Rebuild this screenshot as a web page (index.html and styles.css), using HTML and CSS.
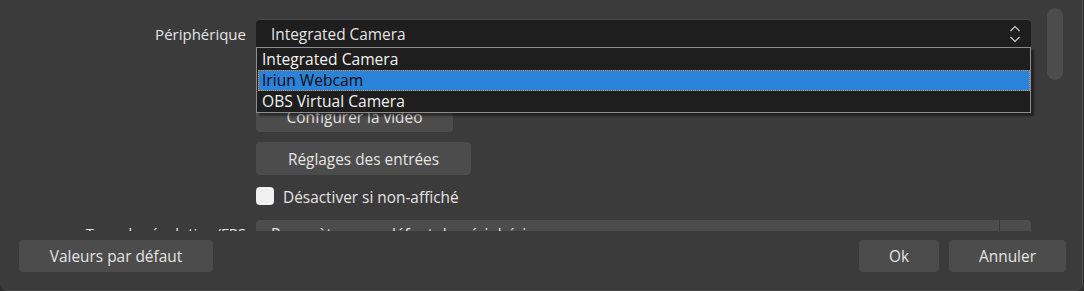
FILE: index.html
```html
<!DOCTYPE html>
<html lang="fr">
<head>
<meta charset="utf-8">
<title>Propriétés</title>
<link rel="stylesheet" href="styles.css">
</head>
<body>
<div class="window">
  <div class="scroll">
    <div class="form">
      <div class="label">Périphérique</div>
      <div class="field">
        <div class="combo combo-open">
          <span class="combo-text">Integrated Camera</span>
          <svg class="chev" width="12" height="20" viewBox="0 0 12 20">
            <polyline points="1.5,7 6,2.5 10.5,7" fill="none" stroke="#cfcfcf" stroke-width="1.2"/>
            <polyline points="1.5,13 6,17.5 10.5,13" fill="none" stroke="#cfcfcf" stroke-width="1.2"/>
          </svg>
        </div>
        <ul class="popup">
          <li class="item">Integrated Camera</li>
          <li class="item item-sel">Iriun Webcam</li>
          <li class="item">OBS Virtual Camera</li>
        </ul>
      </div>

      <div class="label"></div>
      <div class="field"><button class="btn btn-hidden"></button></div>

      <div class="label"></div>
      <div class="field"><button class="btn btn-cfg">Configurer la vidéo</button></div>

      <div class="label"></div>
      <div class="field"><button class="btn btn-reg">Réglages des entrées</button></div>

      <div class="label"></div>
      <div class="field field-check">
        <span class="checkbox"></span>
        <span class="check-label">Désactiver si non-affiché</span>
      </div>

      <div class="label label-type">Type de résolution/FPS</div>
      <div class="field">
        <div class="combo combo-grey">
          <span class="combo-text combo-text-type">Paramètres par défaut du périphérique</span>
          <span class="combo-sep"></span>
          <svg class="chev" width="12" height="20" viewBox="0 0 12 20">
            <polyline points="1.5,12 6,7.5 10.5,12" fill="none" stroke="#cfcfcf" stroke-width="1.2"/>
          </svg>
        </div>
      </div>
    </div>
    <div class="scrollbar"><div class="handle"></div></div>
  </div>
  <div class="footer">
    <button class="btn btn-foot btn-defaults">Valeurs par défaut</button>
    <div class="spacer"></div>
    <button class="btn btn-foot btn-ok">Ok</button>
    <button class="btn btn-foot btn-cancel">Annuler</button>
  </div>
</div>
</body>
</html>
```

FILE: styles.css
```css
html, body {
  margin: 0;
  padding: 0;
  background: #2c2c2c;
}
body {
  width: 1084px;
  height: 291px;
  overflow: hidden;
  font-family: "Open Sans", "Noto Sans", sans-serif;
  font-size: 15.4px;
  color: #e4e4e4;
}
.window {
  width: 1082px;
  height: 290px;
  background: #3b3b3b;
  border-right: 1px solid #505050;
  border-bottom: 1px solid #4a4a4a;
  border-radius: 0 0 8px 8px;
  display: flex;
  flex-direction: column;
}
.scroll {
  height: 231px;
  overflow: hidden;
  display: flex;
  flex-shrink: 0;
}
.form {
  display: grid;
  grid-template-columns: 246px 775px;
  grid-template-rows: 28px 32px 33px 33px 25px 28px;
  column-gap: 10px;
  row-gap: 10px;
  padding-top: 19px;
  align-content: start;
}
.label {
  text-align: right;
  line-height: 30px;
  white-space: nowrap;
  font-size: 15px;
}
.label-type {
  line-height: 26px;
}
.field {
  position: relative;
}
.combo {
  height: 28px;
  border-radius: 4px 4px 0 0;
  display: flex;
  align-items: center;
  padding: 0 10px 0 15px;
  box-sizing: border-box;
}
.combo-open {
  background: #1e1e1e;
  border-top: 1px solid #4a4a4a;
}
.combo-grey {
  background: #4c4c4c;
  border-radius: 4px;
}
.combo-text {
  flex: 1;
  white-space: nowrap;
  line-height: 28px;
  padding-top: 3px;
}
.combo-text-type {
  padding-top: 2px;
}
.combo-sep {
  width: 1px;
  align-self: stretch;
  background: #383838;
  margin-right: 9px;
}
.chev {
  display: block;
  flex-shrink: 0;
}
.popup {
  position: absolute;
  top: 28px;
  left: 0;
  width: 775px;
  height: 66px;
  box-sizing: border-box;
  margin: 0;
  padding: 1px 0 0 0;
  list-style: none;
  background: #1e1e1e;
  border: 1px solid #8e8e8e;
  box-shadow: 3px 3px 2px rgba(0, 0, 0, 0.45);
  z-index: 5;
}
.item {
  height: 21px;
  line-height: 21px;
  padding-left: 5px;
  color: #f2f2f2;
  font-size: 15.6px;
  box-sizing: border-box;
}
.item-sel {
  background: #2b82d9;
  color: #0a0a0a;
  outline: 1px dotted #e08a2c;
  outline-offset: -1px;
  padding-left: 4px;
  margin-left: 1px;
}
.btn {
  font-family: inherit;
  font-size: 15.4px;
  color: #e4e4e4;
  background: #4c4c4c;
  border: none;
  border-radius: 4px;
  padding: 0;
  display: block;
}
.btn-hidden { width: 196px; height: 32px; }
.btn-cfg { width: 197px; height: 33px; padding-top: 3px; }
.btn-reg { width: 215px; height: 33px; padding-top: 1px; }
.field-check {
  display: flex;
  align-items: flex-start;
  gap: 9px;
}
.checkbox {
  width: 18px;
  height: 18px;
  margin-top: 2px;
  background: #f0f0f0;
  border-radius: 4px;
  flex-shrink: 0;
}
.check-label {
  line-height: 22px;
  padding-top: 2px;
}
.scrollbar {
  width: 16px;
  margin-left: 16px;
  padding-top: 8px;
}
.handle {
  width: 16px;
  height: 72px;
  border-radius: 8px;
  background: #4c4c4c;
}
.footer {
  display: flex;
  gap: 10px;
  padding: 9px 16px 0 19px;
}
.spacer { flex: 1; }
.btn-foot { height: 32px; }
.btn-defaults { width: 194px; }
.btn-ok { width: 80px; }
.btn-cancel { width: 117px; }
```
